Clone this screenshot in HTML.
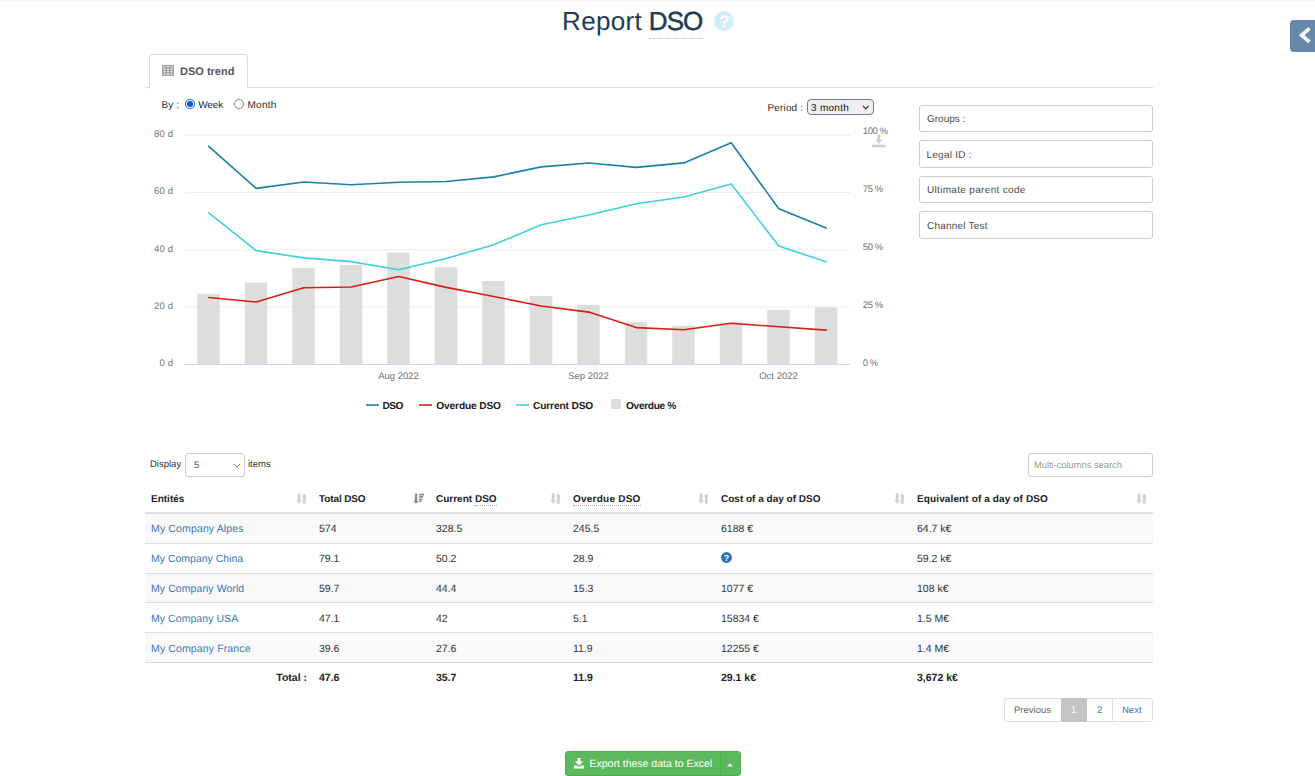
<!DOCTYPE html>
<html lang="en">
<head>
<meta charset="utf-8">
<title>Report DSO</title>
<style>
html,body{margin:0;padding:0;background:#fff;}
body{text-rendering:geometricPrecision;width:1315px;height:776px;overflow:hidden;position:relative;font-family:"Liberation Sans",Arial,sans-serif;font-size:10.5px;color:#333;}
#page{position:absolute;left:0;top:0;width:1315px;height:776px;overflow:hidden;}
.a{position:absolute;white-space:nowrap;line-height:1;}
span.a{margin-top:1px;}
.b{font-weight:bold;}
h1{position:absolute;margin:0;left:562px;top:4px;font-size:26px;line-height:34px;font-weight:normal;color:#1d3b54;white-space:nowrap;}
h1 abbr{position:absolute;left:86.8px;top:0;font-weight:normal;text-decoration:none;letter-spacing:-.9px;-webkit-text-stroke:0.45px #1d3b54;}
h1 abbr:after{content:"";position:absolute;left:0;right:-1px;top:33.5px;border-bottom:1px dotted #bbb;}
.tabline{position:absolute;left:145px;top:87px;width:1008px;height:1px;background:#ddd;}
.tab{position:absolute;left:149px;top:54px;width:97px;height:33px;border:1px solid #ddd;border-bottom:1px solid #fff;border-radius:4px 4px 0 0;background:#fff;}
.box{position:absolute;left:919px;width:232px;height:25px;border:1px solid #ccc;border-radius:3px;background:#fff;}
.box span{position:absolute;left:7px;top:9.3px;font-size:10px;line-height:10px;color:#4a4a4a;letter-spacing:.25px;white-space:nowrap;}
.radio{position:absolute;width:8px;height:8px;border:1px solid #858585;border-radius:50%;background:#fff;}
.radio.on{border-color:#0b5fe0;border-width:1.2px;width:7.6px;height:7.6px;}
.radio.on:after{content:"";position:absolute;left:1.2px;top:1.2px;width:5.6px;height:5.6px;border-radius:50%;background:#0b5fe0;}
.sel{position:absolute;border:1px solid #77778a;border-radius:4px;background:#efeff1;}
.row{position:absolute;left:145px;width:1008px;}
.sep{position:absolute;left:145px;width:1008px;height:1px;background:#ddd;}
.th{font-size:10px;font-weight:bold;color:#222;}
.td{font-size:10.5px;color:#333;}
.lnk{color:#3a78b5;}
.tot{font-size:10.5px;font-weight:bold;color:#222;}
abbr{text-decoration:none;}
.dot{border-bottom:1px dotted #aaa;}
</style>
</head>
<body>
<div id="page">

<div class="a" style="left:0;top:0;width:1315px;height:1px;background:#f7f7f7;"></div>
<!-- title -->
<h1><span style="letter-spacing:.35px">Report</span> <abbr title="Days Sales Outstanding">DSO</abbr></h1>
<svg class="a" style="left:714px;top:11px" width="20" height="20" viewBox="0 0 20 20"><circle cx="10" cy="10" r="9.9" fill="#d3ecfa"/><text x="10" y="16" text-anchor="middle" font-family="Liberation Sans, sans-serif" font-weight="bold" font-size="16.5" fill="#fff">?</text></svg>

<!-- side toggle -->
<div class="a" style="left:1290px;top:20px;width:25px;height:32px;background:#6688aa;border-radius:4px 0 0 4px;"></div>
<svg class="a" style="left:1296px;top:25px" width="18" height="22" viewBox="0 0 18 22"><path d="M13.5 3.4 L5.7 10.15 L13.5 16.9" fill="none" stroke="#f4f4f4" stroke-width="3.9" stroke-linejoin="miter"/></svg>

<!-- tabs -->
<div class="tabline"></div>
<div class="tab"></div>
<svg class="a" style="left:162px;top:65px" width="12" height="11" viewBox="0 0 12 11"><rect x="0" y="0" width="12" height="11" fill="#ebe8e4"/><g fill="#a5a29d"><rect x="0" y="0" width="12" height="1.3"/><rect x="0" y="2.4" width="12" height="1.3"/><rect x="0" y="4.8" width="12" height="1.3"/><rect x="0" y="7.2" width="12" height="1.3"/><rect x="0" y="9.6" width="12" height="1.4"/><rect x="0" y="0" width="1.2" height="11"/><rect x="3.6" y="0" width="1.2" height="11"/><rect x="7.2" y="0" width="1.2" height="11"/><rect x="10.8" y="0" width="1.2" height="11"/></g></svg>
<span class="a b" style="left:180px;top:66px;font-size:11px;color:#555;">DSO trend</span>

<!-- chart controls -->
<span class="a" style="left:161.5px;top:99px;font-size:10px;line-height:11px;color:#2a2a2a;letter-spacing:.1px;">By :</span>
<div class="radio on" style="left:185px;top:99.3px;"></div>
<span class="a" style="left:198.2px;top:99px;font-size:10px;line-height:11px;color:#2a2a2a;letter-spacing:-.12px;">Week</span>
<div class="radio" style="left:234px;top:99.3px;"></div>
<span class="a" style="left:247.4px;top:99px;font-size:10px;line-height:11px;color:#2a2a2a;letter-spacing:.3px;">Month</span>
<span class="a" style="left:767.5px;top:102px;font-size:10px;line-height:11px;color:#2a2a2a;letter-spacing:.15px;">Period :</span>
<div class="sel" style="left:807px;top:99px;width:65px;height:14px;"></div>
<span class="a" style="left:811px;top:102px;font-size:10px;line-height:11px;color:#111;letter-spacing:.28px;">3 month</span>
<svg class="a" style="left:862px;top:105.3px" width="8" height="6" viewBox="0 0 8 6"><path d="M1 1 L3.8 3.9 L6.6 1" fill="none" stroke="#333" stroke-width="1.1"/></svg>

<!-- filter boxes -->
<div class="box" style="top:105px;"><span style="letter-spacing:0px">Groups :</span></div>
<div class="box" style="top:140px;height:25.5px;"><span style="letter-spacing:.25px;top:10.2px;left:6.5px">Legal ID :</span></div>
<div class="box" style="top:176px;"><span style="letter-spacing:.32px">Ultimate parent code</span></div>
<div class="box" style="top:211px;height:25.5px;"><span style="letter-spacing:.22px;top:10.2px">Channel Test</span></div>

<!-- CHART -->
<svg class="a" style="left:0;top:0" width="1315" height="440" viewBox="0 0 1315 440" font-family="Liberation Sans, sans-serif" text-rendering="geometricPrecision">
<g stroke="#ececec" stroke-width="1" fill="none">
<path d="M185 135.4H850M185 192.5H850M185 249.9H850M185 306.9H850"/>
</g>
<path d="M185 364.5H850" stroke="#ccd6eb" stroke-width="1" fill="none"/>
<g fill="#dddddd"><rect x="197.2" y="293.8" width="22.5" height="70.2"/><rect x="244.8" y="282.5" width="22.5" height="81.5"/><rect x="292.2" y="267.9" width="22.5" height="96.1"/><rect x="339.8" y="265.0" width="22.5" height="99.0"/><rect x="387.2" y="252.7" width="22.5" height="111.3"/><rect x="434.8" y="267.3" width="22.5" height="96.7"/><rect x="482.2" y="281.0" width="22.5" height="83.0"/><rect x="529.8" y="296.0" width="22.5" height="68.0"/><rect x="577.2" y="304.9" width="22.5" height="59.1"/><rect x="624.8" y="322.1" width="22.5" height="41.9"/><rect x="672.2" y="325.7" width="22.5" height="38.3"/><rect x="719.8" y="322.5" width="22.5" height="41.5"/><rect x="767.2" y="309.9" width="22.5" height="54.1"/><rect x="814.8" y="307.3" width="22.5" height="56.7"/></g>
<g fill="none" stroke-linejoin="round" stroke-linecap="round"><path d="M208.8 146.4 L256.2 188.4 L303.8 182.0 L351.2 184.8 L398.8 182.2 L446.2 181.5 L493.8 176.9 L541.2 166.9 L588.8 163.0 L636.2 167.4 L683.8 162.9 L731.2 142.8 L778.8 208.8 L826.2 228.0" stroke="#1b7fa9" stroke-width="1.6"/><path d="M208.8 212.9 L256.2 250.6 L303.8 257.9 L351.2 261.6 L398.8 269.8 L446.2 258.5 L493.8 244.8 L541.2 224.7 L588.8 215.0 L636.2 203.7 L683.8 197.0 L731.2 183.9 L778.8 246.1 L826.2 261.8" stroke="#40d0dd" stroke-width="1.6"/><path d="M208.8 297.5 L256.2 302.0 L303.8 287.8 L351.2 287.0 L398.8 276.5 L446.2 287.4 L493.8 296.5 L541.2 306.0 L588.8 312.1 L636.2 327.6 L683.8 329.8 L731.2 323.2 L778.8 326.8 L826.2 330.1" stroke="#d41f16" stroke-width="1.6"/></g>
<g font-size="9.5" fill="#737373">
<g text-anchor="end" letter-spacing="0.15">
<text x="173.2" y="137.2">80 d</text>
<text x="173.2" y="194.3">60 d</text>
<text x="173.2" y="251.5">40 d</text>
<text x="173.2" y="308.7">20 d</text>
<text x="173.2" y="366.2">0 d</text>
</g>
<g letter-spacing="-0.45">
<text x="862.8" y="134">100 %</text>
<text x="862.8" y="192">75 %</text>
<text x="862.8" y="250">50 %</text>
<text x="862.8" y="308">25 %</text>
<text x="862.8" y="366">0 %</text>
</g>
<text x="398.5" y="379.2" text-anchor="middle">Aug 2022</text>
<text x="588.5" y="379.2" text-anchor="middle">Sep 2022</text>
<text x="778.5" y="379.2" text-anchor="middle">Oct 2022</text>
</g>
<!-- export icon -->
<g fill="#cdcdcd"><rect x="872" y="144.7" width="13.5" height="2.6"/><path d="M877.6 134.4h2.4v5.2h2.4l-3.6 4.5l-3.6-4.5h2.4z"/></g>
<!-- legend -->
<g font-size="10.2" font-weight="bold" fill="#1a1a1a" letter-spacing="-0.35">
<path d="M366 405H379" stroke="#1b7fa9" stroke-width="1.6"/>
<text x="382.5" y="409.2" letter-spacing="-0.55">DSO</text>
<path d="M419 405H432" stroke="#d41f16" stroke-width="1.6"/>
<text x="436.3" y="409.2" letter-spacing="-0.16">Overdue DSO</text>
<path d="M516 405H529" stroke="#40d0dd" stroke-width="1.6"/>
<text x="533" y="409.2" letter-spacing="-0.14">Current DSO</text>
<rect x="611" y="399" width="10" height="10" fill="#dddddd"/>
<text x="626" y="409.2">Overdue %</text>
</g>
</svg>

<!-- TABLE CONTROLS -->
<span class="a" style="left:150px;top:459px;font-size:9.5px;line-height:10px;color:#333;">Display</span>
<div class="a" style="left:185px;top:453.4px;width:58px;height:21.2px;border:1px solid #ccc;border-radius:3px;background:#fff;"></div>
<span class="a" style="left:194px;top:460px;font-size:9.5px;line-height:10px;color:#555;">5</span>
<svg class="a" style="left:233.4px;top:462.6px" width="8" height="6" viewBox="0 0 8 6"><path d="M1 1 L4 4.2 L7 1" fill="none" stroke="#666" stroke-width="1"/></svg>
<span class="a" style="left:248px;top:459px;font-size:9.5px;line-height:10px;color:#333;">items</span>
<div class="a" style="left:1028px;top:453px;width:123px;height:22px;border:1px solid #ccc;border-radius:3px;background:#fff;"></div>
<span class="a" style="left:1034px;top:459px;font-size:9.3px;line-height:10px;color:#999;">Multi-columns search</span>

<!-- TABLE -->
<span class="a th" style="left:151px;top:493.6px;">Entités</span>
<svg class="a" style="left:296px;top:492.9px" width="12" height="11" viewBox="0 0 12 11"><g fill="#d2d2d2"><path d="M1.7 0.5h2.8v7.1h1.4l-2.8 3.1l-2.8-3.1h1.4z"/><path d="M6.9 10.7h2.8v-7.1h1.4l-2.8-3.1l-2.8 3.1h1.4z"/></g></svg>
<span class="a th" style="left:319px;top:493.6px;"><span style="letter-spacing:-.12px">Total <abbr>DSO</abbr></span></span>
<svg class="a" style="left:413px;top:492.9px" width="12" height="11" viewBox="0 0 12 11"><g fill="#8a8a8a"><path d="M1.9 0.5h2.3v7.2h1.7l-2.85 3l-2.85-3h1.7z"/><rect x="6.1" y="0.7" width="4.9" height="1.7"/><rect x="6.1" y="2.8" width="4.1" height="1.8"/><rect x="6.1" y="5.5" width="3.2" height="1.7"/><rect x="6.1" y="7.6" width="2.4" height="1.6"/></g></svg>
<span class="a th" style="left:436px;top:493.6px;">Current <abbr class="dot">DSO</abbr></span>
<svg class="a" style="left:550px;top:492.9px" width="12" height="11" viewBox="0 0 12 11"><g fill="#d2d2d2"><path d="M1.7 0.5h2.8v7.1h1.4l-2.8 3.1l-2.8-3.1h1.4z"/><path d="M6.9 10.7h2.8v-7.1h1.4l-2.8-3.1l-2.8 3.1h1.4z"/></g></svg>
<span class="a th" style="left:573px;top:493.6px;"><span class="dot" style="letter-spacing:.23px">Overdue <abbr>DSO</abbr></span></span>
<svg class="a" style="left:698px;top:492.9px" width="12" height="11" viewBox="0 0 12 11"><g fill="#d2d2d2"><path d="M1.7 0.5h2.8v7.1h1.4l-2.8 3.1l-2.8-3.1h1.4z"/><path d="M6.9 10.7h2.8v-7.1h1.4l-2.8-3.1l-2.8 3.1h1.4z"/></g></svg>
<span class="a th" style="left:721px;top:493.6px;">Cost of a day of <abbr>DSO</abbr></span>
<svg class="a" style="left:894px;top:492.9px" width="12" height="11" viewBox="0 0 12 11"><g fill="#d2d2d2"><path d="M1.7 0.5h2.8v7.1h1.4l-2.8 3.1l-2.8-3.1h1.4z"/><path d="M6.9 10.7h2.8v-7.1h1.4l-2.8-3.1l-2.8 3.1h1.4z"/></g></svg>
<span class="a th" style="left:917px;top:493.6px;"><span style="letter-spacing:.12px">Equivalent of a day of <abbr>DSO</abbr></span></span>
<svg class="a" style="left:1136px;top:492.9px" width="12" height="11" viewBox="0 0 12 11"><g fill="#d2d2d2"><path d="M1.7 0.5h2.8v7.1h1.4l-2.8 3.1l-2.8-3.1h1.4z"/><path d="M6.9 10.7h2.8v-7.1h1.4l-2.8-3.1l-2.8 3.1h1.4z"/></g></svg>
<div class="a" style="left:145px;top:512px;width:1008px;height:2px;background:#ddd;"></div>
<div class="a" style="left:145px;top:514px;width:1008px;height:29px;background:#f9f9f9;"></div>
<div class="sep" style="top:543px;"></div>
<span class="a td lnk" style="left:151px;top:522.9px;letter-spacing:0.14px;">My Company Alpes</span>
<span class="a td" style="left:319px;top:522.9px;">574</span>
<span class="a td" style="left:436px;top:522.9px;">328.5</span>
<span class="a td" style="left:573px;top:522.9px;">245.5</span>
<span class="a td" style="left:721px;top:522.9px;">6188 €</span>
<span class="a td" style="left:917px;top:522.9px;">64.7 k€</span>
<div class="sep" style="top:573px;"></div>
<span class="a td lnk" style="left:151px;top:552.8px;letter-spacing:0px;">My Company China</span>
<span class="a td" style="left:319px;top:552.8px;">79.1</span>
<span class="a td" style="left:436px;top:552.8px;">50.2</span>
<span class="a td" style="left:573px;top:552.8px;">28.9</span>
<svg class="a" style="left:721px;top:552.0px" width="11" height="11" viewBox="0 0 11 11"><circle cx="5.5" cy="5.5" r="5.4" fill="#2270be"/><text x="5.5" y="9" text-anchor="middle" font-family="Liberation Sans, sans-serif" font-weight="bold" font-size="9" fill="#fff">?</text></svg>
<span class="a td" style="left:917px;top:552.8px;">59.2 k€</span>
<div class="a" style="left:145px;top:574px;width:1008px;height:28.299999999999955px;background:#f9f9f9;"></div>
<div class="sep" style="top:602.3px;"></div>
<span class="a td lnk" style="left:151px;top:583.0px;letter-spacing:0.08px;">My Company World</span>
<span class="a td" style="left:319px;top:583.0px;">59.7</span>
<span class="a td" style="left:436px;top:583.0px;">44.4</span>
<span class="a td" style="left:573px;top:583.0px;">15.3</span>
<span class="a td" style="left:721px;top:583.0px;">1077 €</span>
<span class="a td" style="left:917px;top:583.0px;">108 k€</span>
<div class="sep" style="top:632px;"></div>
<span class="a td lnk" style="left:151px;top:613.0px;letter-spacing:0.06px;">My Company USA</span>
<span class="a td" style="left:319px;top:613.0px;">47.1</span>
<span class="a td" style="left:436px;top:613.0px;">42</span>
<span class="a td" style="left:573px;top:613.0px;">5.1</span>
<span class="a td" style="left:721px;top:613.0px;">15834 €</span>
<span class="a td" style="left:917px;top:613.0px;">1.5 M€</span>
<div class="a" style="left:145px;top:633px;width:1008px;height:29px;background:#f9f9f9;"></div>
<div class="sep" style="top:662px;"></div>
<span class="a td lnk" style="left:151px;top:643.1px;letter-spacing:0.13px;">My Company France</span>
<span class="a td" style="left:319px;top:643.1px;">39.6</span>
<span class="a td" style="left:436px;top:643.1px;">27.6</span>
<span class="a td" style="left:573px;top:643.1px;">11.9</span>
<span class="a td" style="left:721px;top:643.1px;">12255 €</span>
<span class="a td" style="left:917px;top:643.1px;">1.4 M€</span>
<span class="a tot" style="right:1008px;top:672.2px;">Total :</span>
<span class="a tot" style="left:319px;top:672.2px;">47.6</span>
<span class="a tot" style="left:436px;top:672.2px;">35.7</span>
<span class="a tot" style="left:573px;top:672.2px;">11.9</span>
<span class="a tot" style="left:721px;top:672.2px;">29.1 k€</span>
<span class="a tot" style="left:917px;top:672.2px;">3,672 k€</span>

<!-- pagination -->
<div class="a" style="left:1004px;top:698px;width:147px;height:22px;border:1px solid #ddd;border-radius:3px;background:#fff;"></div>
<div class="a" style="left:1061px;top:698px;width:26px;height:24px;background:#c4c4c4;"></div>
<div class="a" style="left:1112px;top:699px;width:1px;height:22px;background:#ddd;"></div>
<span class="a" style="left:1014px;top:705px;font-size:9.5px;color:#666;">Previous</span>
<span class="a" style="left:1071px;top:705px;font-size:9.5px;color:#fff;">1</span>
<span class="a" style="left:1097px;top:705px;font-size:9.5px;color:#3a78b5;">2</span>
<span class="a" style="left:1122px;top:705px;font-size:9.5px;color:#3a78b5;">Next</span>

<!-- export button -->
<div class="a" style="left:565px;top:751px;width:174px;height:23px;border:1px solid #4cae4c;border-radius:3px;background:#5cb85c;"></div>
<div class="a" style="left:720px;top:752px;width:1px;height:23px;background:#4cae4c;"></div>
<svg class="a" style="left:574px;top:758px" width="10" height="11" viewBox="0 0 10 11"><g fill="#fff"><path d="M3.5 0h3v3.6h2.6l-4.1 4l-4.1-4h2.6z"/><path d="M0 7.4h2.6l1 1.2h2.8l1-1.2h2.6v3h-10z"/></g></svg>
<span class="a" style="left:589.5px;top:758px;font-size:10.5px;color:#fff;">Export these data to Excel</span>
<svg class="a" style="left:727px;top:763px" width="6" height="4" viewBox="0 0 6 4"><path d="M0 3.4L3 0.2L6 3.4z" fill="#fff"/></svg>

</div>
</body>
</html>
